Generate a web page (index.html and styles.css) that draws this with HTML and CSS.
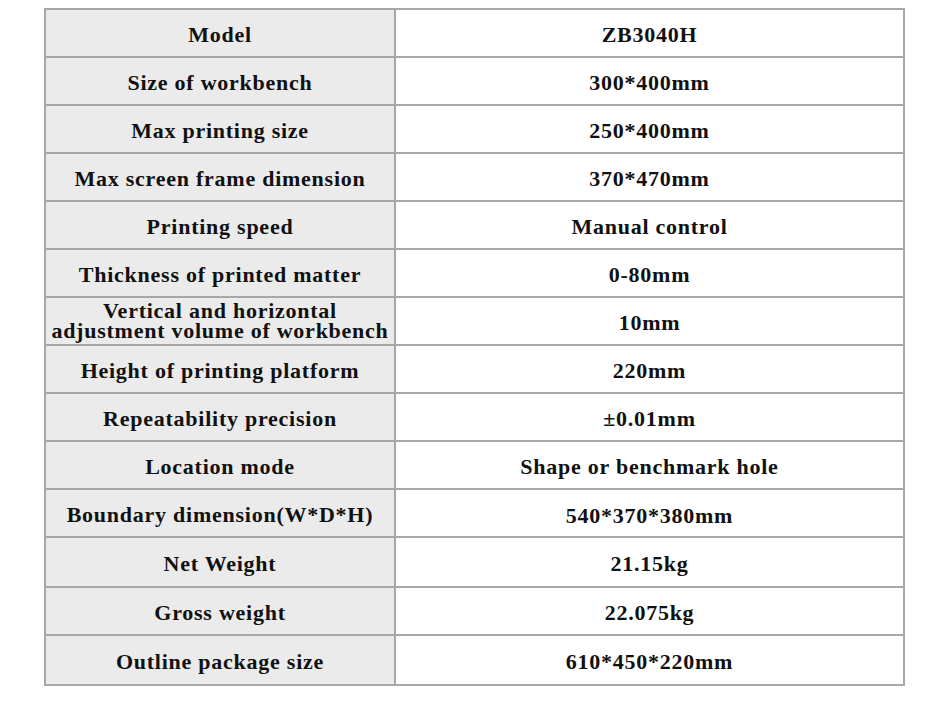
FILE: index.html
```html
<!DOCTYPE html>
<html>
<head>
<meta charset="utf-8">
<link rel="stylesheet" href="styles.css">
</head>
<body>
<table class="spec">
  <tr><td class="k">Model</td><td class="v">ZB3040H</td></tr>
  <tr><td class="k">Size of workbench</td><td class="v">300*400mm</td></tr>
  <tr><td class="k">Max printing size</td><td class="v">250*400mm</td></tr>
  <tr><td class="k">Max screen frame dimension</td><td class="v">370*470mm</td></tr>
  <tr><td class="k">Printing speed</td><td class="v">Manual control</td></tr>
  <tr><td class="k">Thickness of printed matter</td><td class="v">0-80mm</td></tr>
  <tr><td class="k two"><span class="ln">Vertical and horizontal</span><span class="ln">adjustment volume of workbench</span></td><td class="v">10mm</td></tr>
  <tr><td class="k">Height of printing platform</td><td class="v">220mm</td></tr>
  <tr><td class="k">Repeatability precision</td><td class="v">±0.01mm</td></tr>
  <tr><td class="k">Location mode</td><td class="v">Shape or benchmark hole</td></tr>
  <tr><td class="k">Boundary dimension(W*D*H)</td><td class="v low">540*370*380mm</td></tr>
  <tr class="tall"><td class="k">Net Weight</td><td class="v">21.15kg</td></tr>
  <tr><td class="k">Gross weight</td><td class="v">22.075kg</td></tr>
  <tr class="tall"><td class="k">Outline package size</td><td class="v">610*450*220mm</td></tr>
</table>
</body>
</html>
```
FILE: styles.css
```css
html, body {
  margin: 0;
  padding: 0;
  background: #ffffff;
}
body {
  padding: 8px 0 0 44px;
}
.spec {
  border-collapse: collapse;
  width: 861px;
  table-layout: fixed;
  font-family: "Liberation Serif", "Times New Roman", serif;
  font-weight: bold;
  font-size: 22px;
  letter-spacing: 0.75px;
  color: #111111;
}
.spec tr {
  height: 48px;
}
.spec tr.tall {
  height: 50px;
}
.spec td {
  border: 2px solid #a8a8a8;
  text-align: center;
  vertical-align: middle;
  padding: 3px 0 0 0;
  line-height: 24px;
  white-space: nowrap;
}
.spec td.k {
  width: 348px;
  background: #ebebeb;
}
.spec td.v {
  background: #ffffff;
}
.spec td.two {
  line-height: 20px;
  padding-top: 0;
}
.spec td.two .ln {
  display: block;
  height: 20px;
  overflow: visible;
}
.spec td.low {
  padding-top: 6px;
}
```
